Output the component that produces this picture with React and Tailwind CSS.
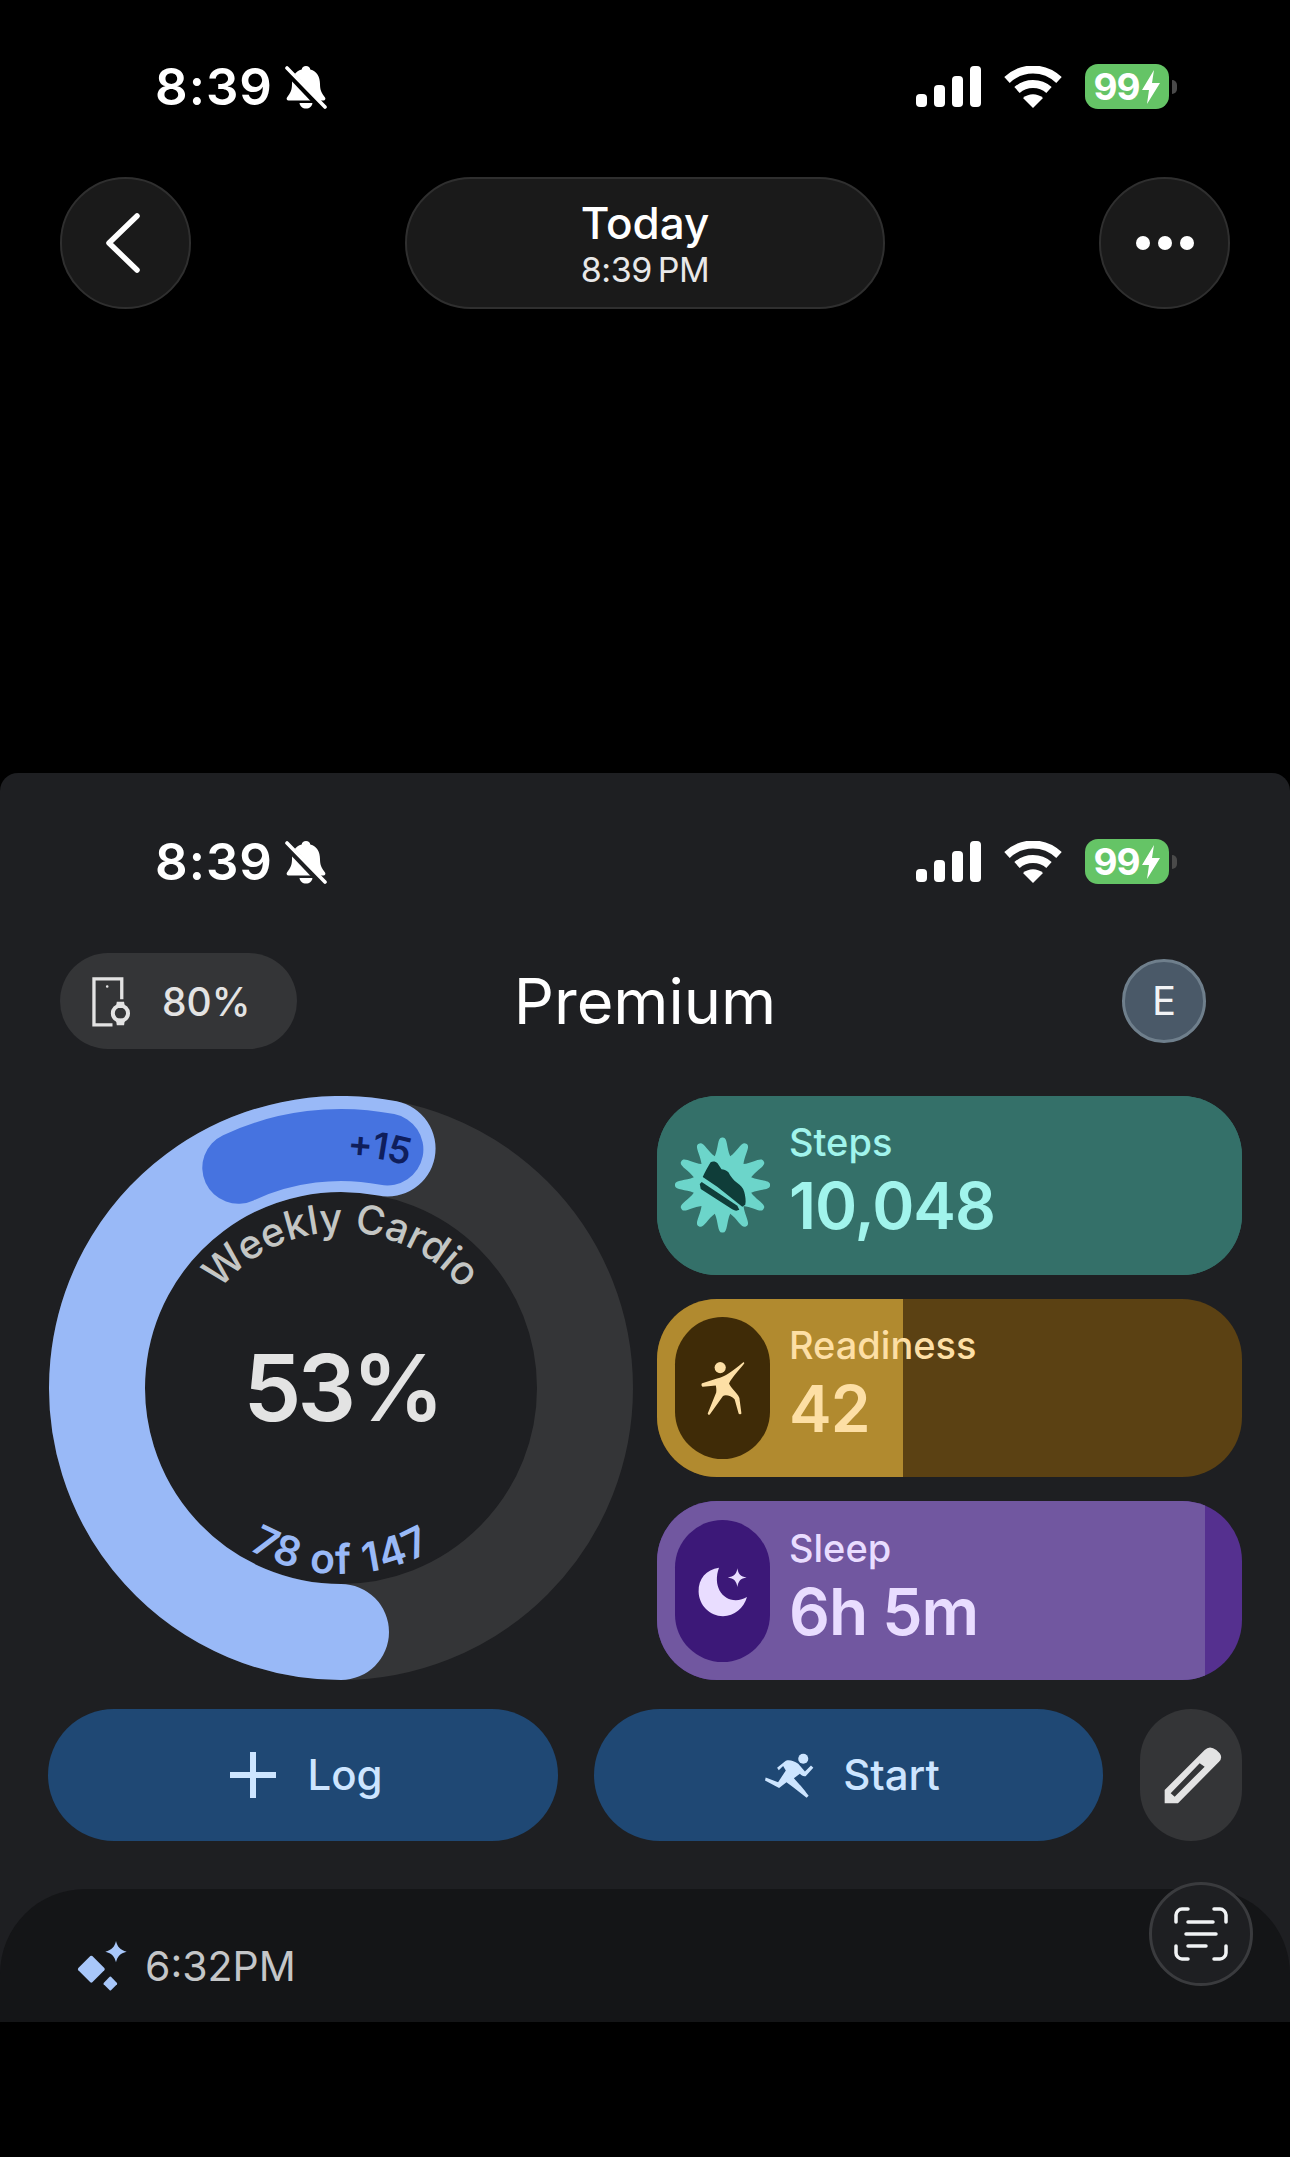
import React from 'react';

const polar = (r, deg) => {
  const a = ((deg - 90) * Math.PI) / 180;
  return `${(293 + r * Math.cos(a)).toFixed(2)} ${(292 + r * Math.sin(a)).toFixed(2)}`;
};

const arc = (r, from, to, sweep, large = 0) =>
  `M ${polar(r, from)} A ${r} ${r} 0 ${large} ${sweep} ${polar(r, to)}`;

function burstPath() {
  let d = '';
  const cx = 48;
  const cy = 48;
  for (let i = 0; i < 12; i++) {
    const a0 = ((i * 30 - 15 - 90) * Math.PI) / 180;
    const a1 = ((i * 30 - 90) * Math.PI) / 180;
    const a2 = ((i * 30 + 15 - 90) * Math.PI) / 180;
    const p = (r, a) => `${(cx + r * Math.cos(a)).toFixed(2)} ${(cy + r * Math.sin(a)).toFixed(2)}`;
    if (i === 0) d += `M ${p(30, a0)} `;
    d += `C ${p(38, a0 + 0.16)} ${p(49, a1 - 0.11)} ${p(48, a1)} `;
    d += `C ${p(49, a1 + 0.11)} ${p(38, a2 - 0.16)} ${p(30, a2)} `;
  }
  return d + 'Z';
}

function BellSlash({ bg }) {
  return (
    <svg viewBox="0 0 42 44" className="w-[42px] h-[44px]">
      <path
        d="M21 1c2.500 0 4 1.500 4.300 3.500C32 6 35 12 35 19c0 6 1.500 9 5 13.500 1 1.500 0 3-1.500 3h-35C2 35.500 1 34 2 32.500 5.500 28 7 25 7 19 7 12 10 6 16.700 4.500 17 2.500 18.500 1 21 1z"
        fill="#fff"
      />
      <path d="M14.500 38h13c-.5 3.500-3 5.500-6.500 5.500s-6-2-6.500-5.500z" fill="#fff" />
      <path d="M0 4l38 40" stroke={bg} strokeWidth="7" fill="none" />
      <path d="M2 3l38 39" stroke="#fff" strokeWidth="3.600" strokeLinecap="round" fill="none" />
    </svg>
  );
}

function StatusBar({ bg }) {
  return (
    <div className="flex items-center justify-between pl-[155px] pr-[113px] h-[45px]">
      <div className="flex items-center gap-[10px]">
        <span className="text-[51px] leading-none font-semibold tracking-[1px] text-white w-[120px]">8:39</span>
        <BellSlash bg={bg} />
      </div>
      <div className="flex items-center">
        <svg viewBox="0 0 65 41" className="w-[65px] h-[41px]" fill="#fff">
          <rect x="0" y="28" width="11" height="13" rx="4" />
          <rect x="18" y="19" width="11" height="22" rx="4" />
          <rect x="36" y="10" width="11" height="31" rx="4" />
          <rect x="54" y="0" width="11" height="41" rx="4" />
        </svg>
        <svg viewBox="0 0 58 42" className="w-[58px] h-[42px] ml-[23px]">
          <path d="M3 14C18 0 40 0 55 14" stroke="#fff" strokeWidth="8" fill="none" />
          <path d="M13 24c9-8 23-8 32 0" stroke="#fff" strokeWidth="8" fill="none" />
          <path d="M19 32c6-5 14-5 20 0l-10 10z" fill="#fff" />
        </svg>
        <div className="flex items-center justify-center gap-[1px] w-[84px] h-[45px] ml-[23px] rounded-[13px] bg-[#65c466]">
          <span className="text-[37px] leading-none font-bold text-white tracking-[-1px]">99</span>
          <svg viewBox="0 0 20 34" className="w-[20px] h-[34px]" fill="#fff">
            <path d="M13 0L1 20h7l-2 14L19 13h-8z" />
          </svg>
        </div>
        <div className="w-[5px] h-[14px] ml-[3px] rounded-r-full bg-[#4a4a4a]" />
      </div>
    </div>
  );
}

function CircleButton({ children }) {
  return (
    <button className="flex items-center justify-center w-[131px] h-[132px] rounded-full bg-[#1a1a1a] border-2 border-[#2f2f2f]">
      {children}
    </button>
  );
}

function WeeklyRing() {
  return (
    <svg viewBox="0 0 585 584" className="w-[585px] h-[584px] shrink-0">
      <defs>
        <path id="weeklyArc" d={arc(156, -70, 70, 1)} />
        <path id="goalArc" d={arc(186, 250, 110, 0)} />
        <path id="bonusArc" d={arc(232, -21, 39, 1)} />
      </defs>
      <circle cx="293" cy="292" r="244" fill="none" stroke="#343537" strokeWidth="96" />
      <path d={arc(244, 11, 180, 0, 1)} fill="none" stroke="#99b9f7" strokeWidth="96" strokeLinecap="round" />
      <path d={arc(243, 11, -25, 0)} fill="none" stroke="#4673e0" strokeWidth="72" strokeLinecap="round" />
      <text fontSize="37" fontWeight="600" fill="#0f1e5c" textAnchor="middle" letterSpacing="-1">
        <textPath href="#bonusArc" startOffset="50%">+15</textPath>
      </text>
      <text fontSize="40" fontWeight="500" fill="#c4c6c4" textAnchor="middle">
        <textPath href="#weeklyArc" startOffset="50%">Weekly Cardio</textPath>
      </text>
      <text fontSize="41" fontWeight="600" fill="#99b9f7" textAnchor="middle" letterSpacing="1.500">
        <textPath href="#goalArc" startOffset="50%">78 of 147</textPath>
      </text>
      <text x="294" y="325" fontSize="92" fontWeight="600" fill="#e3e3e3" textAnchor="middle" letterSpacing="-4">53%</text>
    </svg>
  );
}

function StepsIcon() {
  return (
    <svg viewBox="0 0 96 96" className="w-[96px] h-[96px]">
      <path d={burstPath()} fill="#6cd5ca" />
      <g fill="#0f3d39" transform="translate(-15 -27)">
        <path d="M51 52c2-1 5-1 7 1l4 6c2 0 5 1 7 3 2 4 5 8 9 11 3 2 6 5 7 9 1 4 2 9 1 13l-3 2L58 77l-15-10c2-5 5-10 8-15z" />
        <path d="M40 74l2-2 36 24 2 4-3 1c-2 0-3-1-5-2L41 79z" />
      </g>
    </svg>
  );
}

function ReadinessIcon() {
  return (
    <svg viewBox="150 710 120 140" className="w-[48px] h-[56px]" fill="#fddfa5">
      <circle cx="203" cy="729" r="14" />
      <path d="M158 768l37-12c20-3 40-20 65-40 2-1 4 1 3 3-14 18-30 34-38 50 5 12 20 22 26 36l5 38c0 3-6 4-7 1l-10-36c-8-8-22-12-29-8l-33 46c-2 2-6 0-5-3l21-52c1-6 0-12-1-17l-32 3c-4 0-5-8-2-9z" />
    </svg>
  );
}

function SleepIcon() {
  return (
    <svg viewBox="145 1225 130 130" className="w-[52px] h-[52px]" fill="#e9ddff">
      <path d="M200 1232c-32 4-52 28-51 60 1 34 28 61 61 61 28 0 52-20 60-48-8 5-18 8-28 8-36 0-58-38-42-81z" />
      <path d="M246 1233c2 14 8 21 23 23-15 2-21 9-23 24-2-15-9-22-24-24 15-2 22-9 24-23z" />
    </svg>
  );
}

function MetricCard({ base, fill, fillWidth, pill, text, label, value, icon }) {
  return (
    <div className="relative flex items-center flex-1 pl-[18px] rounded-[60px] overflow-hidden" style={{ backgroundColor: base, color: text }}>
      <div className="absolute inset-y-0 left-0" style={{ width: fillWidth, backgroundColor: fill }} />
      <div className="relative flex items-center justify-center w-[95px] h-[142px] rounded-[48px] shrink-0" style={{ backgroundColor: pill }}>
        {icon}
      </div>
      <div className="relative flex flex-col ml-[19px] pb-[14px]">
        <span className="text-[38px] leading-[56px] font-medium">{label}</span>
        <span className="text-[64px] leading-[72px] font-semibold tracking-[-1px]">{value}</span>
      </div>
    </div>
  );
}

export default function App() {
  return (
    <div className="w-[1290px] h-[2157px] bg-black overflow-hidden font-['Inter']">
      {/* Top capture */}
      <div className="h-[773px] pt-[64px]">
        <StatusBar bg="#000" />
        <div className="flex items-center justify-between px-[60px] mt-[68px]">
          <CircleButton>
            <svg viewBox="0 0 40 62" className="w-[40px] h-[62px] mr-[6px]" fill="none" stroke="#fff" strokeWidth="5.500" strokeLinecap="round" strokeLinejoin="round">
              <path d="M34 4L6 31l28 27" />
            </svg>
          </CircleButton>
          <div className="flex flex-col items-center justify-center w-[480px] h-[132px] pt-[2px] rounded-full bg-[#1a1a1a] border-2 border-[#2f2f2f] text-white">
            <span className="text-[44px] leading-[52px] font-medium">Today</span>
            <span className="text-[34px] leading-[42px] tracking-[-0.5px] [word-spacing:-3px] text-[#e8e8e8]">8:39 PM</span>
          </div>
          <CircleButton>
            <div className="flex gap-[8px]">
              <div className="w-[14px] h-[14px] rounded-full bg-white" />
              <div className="w-[14px] h-[14px] rounded-full bg-white" />
              <div className="w-[14px] h-[14px] rounded-full bg-white" />
            </div>
          </CircleButton>
        </div>
      </div>

      {/* App panel */}
      <div className="h-[1249px] rounded-t-[18px] bg-[#1e1f22] overflow-hidden pt-[66px]">
        <StatusBar bg="#1e1f22" />

        <div className="grid grid-cols-[1fr_auto_1fr] items-center px-[60px] mt-[69px] h-[96px]">
          <div className="flex items-center w-[237px] h-[96px] pl-[30px] gap-[29px] rounded-full bg-[#343537]">
            <svg viewBox="30 10 130 165" className="w-[43px] h-[55px]" fill="none" stroke="#e3e3e3" strokeWidth="10">
              <path d="M98 163H42V24h84v62" />
              <circle cx="82" cy="47" r="2" fill="#e3e3e3" strokeWidth="4" />
              <circle cx="122" cy="128" r="23" strokeWidth="12" />
              <path d="M108 112l3-19h22l3 19zM108 144l3 20h22l3-20z" fill="#e3e3e3" stroke="none" />
            </svg>
            <span className="text-[39px] leading-none font-medium text-[#e3e3e3]">80%</span>
          </div>
          <span className="text-[63px] leading-none text-white">Premium</span>
          <div className="flex justify-end pr-[24px]">
            <div className="flex items-center justify-center w-[84px] h-[84px] rounded-full bg-[#4a5968] border-[3px] border-[#6f7f8c] text-[40px] text-[#f1f3f5]">
              E
            </div>
          </div>
        </div>

        <div className="flex justify-between px-[48px] mt-[47px]">
          <WeeklyRing />
          <div className="flex flex-col gap-[24px] w-[585px] h-[584px]">
            <MetricCard base="#347069" fill="#347069" fillWidth="100%" pill="transparent" text="#a1f4ec" label="Steps" value="10,048" icon={<StepsIcon />} />
            <MetricCard base="#5b4113" fill="#b18a2f" fillWidth="246px" pill="#3f2b07" text="#fddfa5" label="Readiness" value="42" icon={<ReadinessIcon />} />
            <MetricCard base="#55308f" fill="#7157a0" fillWidth="548px" pill="#3c1878" text="#e9ddff" label="Sleep" value="6h 5m" icon={<SleepIcon />} />
          </div>
        </div>

        <div className="flex gap-[36px] px-[48px] mt-[29px]">
          <button className="flex items-center justify-center gap-[31px] w-[510px] h-[132px] pl-[7px] rounded-full bg-[#1f4874] text-[#cde5ff]">
            <svg viewBox="0 0 46 46" className="w-[46px] h-[46px]" fill="none" stroke="currentColor" strokeWidth="6">
              <path d="M23 0v46M0 23h46" />
            </svg>
            <span className="text-[42px] leading-none font-medium">Log</span>
          </button>
          <button className="flex items-center justify-center gap-[28px] w-[509px] h-[132px] pl-[6px] rounded-full bg-[#1f4874] text-[#cde5ff]">
            <svg viewBox="40 50 155 140" className="w-[52px] h-[47px]" fill="currentColor">
              <circle cx="160" cy="70" r="15" />
              <path d="M82 97l26-21c12-4 24 1 37 9l20 23 18-18 7 7-23 25c-7 2-12-2-17-7l-18 13 18 20c5 4 26 32 26 32l-6 6-40-31-20-15-22 17-42-22 2-9 37 14 23-35-8-13-13 12z" />
            </svg>
            <span className="text-[42px] leading-none font-medium">Start</span>
          </button>
          <button className="flex items-center justify-center w-[102px] h-[132px] ml-[1px] pl-[4px] rounded-full bg-[#343537]">
            <svg viewBox="35 30 180 180" className="w-[60px] h-[60px]" fill="#e3e3e3" fillRule="evenodd">
              <path d="M160 45q15-15 35 0l10 10q10 13-2 25L80 205H40v-40zM145 85l15 10-90 90-12-10z" />
            </svg>
          </button>
        </div>

        <div className="relative h-[133px] mt-[48px] pl-[77px] pt-[52px] rounded-t-[85px] bg-[#141517]">
          <div className="flex items-center gap-[18px]">
            <svg viewBox="20 20 150 150" className="w-[50px] h-[50px]" fill="#a8c7fa">
              <path d="M60 65q3-2 6 0l36 36q3 4 0 7l-36 36q-3 2-6 0l-36-36q-3-3 0-7z" />
              <path d="M137 20c4 17 12 27 32 32-20 5-28 15-32 32-4-17-12-27-32-32 20-5 28-15 32-32z" />
              <path d="M118 127q2-1 4 0l18 19q1 2 0 4l-18 18q-2 1-4 0l-18-18q-1-2 0-4z" />
            </svg>
            <span className="text-[41px] leading-none text-[#c4c6c8]">6:32PM</span>
          </div>
          <div className="absolute right-[37px] top-[-7px] flex items-center justify-center w-[104px] h-[104px] rounded-full bg-[#1e1f22] border-[3px] border-[#3a3b3e]">
            <svg viewBox="0 0 54 54" className="w-[54px] h-[54px]" fill="none" stroke="#f1f3f5" strokeWidth="3.500" strokeLinecap="round">
              <path d="M2 15V8c0-3 3-6 6-6h6M40 2h6c3 0 6 3 6 6v7M52 39v7c0 3-3 6-6 6h-6M14 52H8c-3 0-6-3-6-6v-7" />
              <path d="M14 15h25M12 27h30M14 39h18" />
            </svg>
          </div>
        </div>
      </div>
    </div>
  );
}
